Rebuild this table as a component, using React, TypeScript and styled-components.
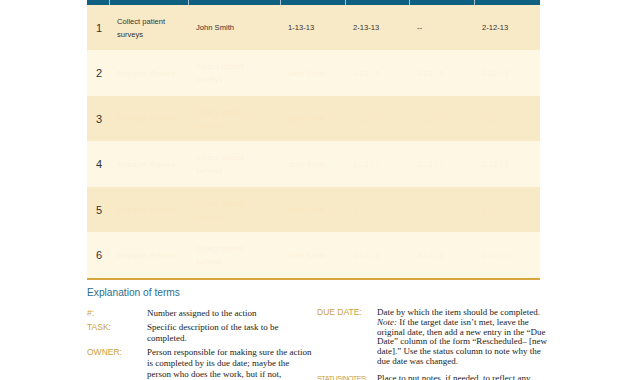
import styled, { createGlobalStyle } from "styled-components";

const GlobalStyle = createGlobalStyle`
  html, body {
    margin: 0;
    padding: 0;
    background: #ffffff;
  }
  body {
    font-family: "Liberation Sans", Arial, sans-serif;
    overflow: hidden;
  }
`;

const COLUMNS = "23px 79px 92px 65px 64px 65px 65px";

type Row = {
  num: number;
  task: string[];
  owner: string[];
  start: string;
  due: string;
  revised: string;
  done: string;
  ghost?: boolean;
};

const rows: Row[] = [
  {
    num: 1,
    task: ["Collect patient", "surveys"],
    owner: ["John Smith"],
    start: "1-13-13",
    due: "2-13-13",
    revised: "--",
    done: "2-12-13",
  },
  ...[2, 3, 4, 5, 6].map((n) => ({
    num: n,
    task: ["Example: Review"],
    owner: ["Collect patient", "surveys"],
    start: "John Smith",
    due: "1-13-13",
    revised: "2-13-13",
    done: "2-12-13",
    ghost: true,
  })),
];

function App(): JSX.Element {
  return (
    <>
      <GlobalStyle />
      <Page>
        <Sheet>
          <HeaderRow>
            {Array.from({ length: 7 }).map((_, i) => (
              <HeaderCell key={i} $last={i === 6} />
            ))}
          </HeaderRow>

          {rows.map((r) => (
            <BodyRow key={r.num} $alt={r.num % 2 === 0}>
              <NumCell>{r.num}</NumCell>
              <Cell $ghost={r.ghost}>
                {r.task.map((t) => (
                  <span key={t}>{t}</span>
                ))}
              </Cell>
              <Cell $ghost={r.ghost}>
                {r.owner.map((t) => (
                  <span key={t}>{t}</span>
                ))}
              </Cell>
              <Cell $ghost={r.ghost}>{r.start}</Cell>
              <Cell $ghost={r.ghost}>{r.due}</Cell>
              <Cell $ghost={r.ghost}>{r.revised}</Cell>
              <Cell $ghost={r.ghost}>{r.done}</Cell>
            </BodyRow>
          ))}
          <GoldRule />

          <Heading>Explanation of terms</Heading>

          <Terms>
            <TermColumn $lh={11} $gap={3}>
              <Term>
                <Label>#:</Label>
                <Desc>Number assigned to the action</Desc>
              </Term>
              <Term>
                <Label>TASK:</Label>
                <Desc>
                  Specific description of the task to be
                  <br />
                  completed.
                </Desc>
              </Term>
              <Term>
                <Label>OWNER:</Label>
                <Desc>
                  Person responsible for making sure the action
                  <br />
                  is completed by its due date; maybe the
                  <br />
                  person who does the work, but if not,
                </Desc>
              </Term>
            </TermColumn>

            <TermColumn $lh={9.8} $gap={7}>
              <Term>
                <Label>DUE DATE:</Label>
                <Desc>
                  Date by which the item should be completed.
                  <br />
                  <em>Note:</em> If the target date isn’t met, leave the
                  <br />
                  original date, then add a new entry in the “Due
                  <br />
                  Date” column of the form “Rescheduled– [new
                  <br />
                  date].” Use the status column to note why the
                  <br />
                  due date was changed.
                </Desc>
              </Term>
              <Term>
                <Label $tight>STATUS/NOTES:</Label>
                <Desc>Place to put notes, if needed, to reflect any</Desc>
              </Term>
            </TermColumn>
          </Terms>
        </Sheet>
      </Page>
    </>
  );
}

export default App;

const Page = styled.div`
  width: 630px;
  height: 380px;
  padding-left: 87px;
  box-sizing: border-box;
  overflow: hidden;
`;

const Sheet = styled.div`
  width: 453px;
  display: flex;
  flex-direction: column;
`;

const HeaderRow = styled.div`
  display: grid;
  grid-template-columns: ${COLUMNS};
  height: 5px;
  background: #0f6080;
`;

const HeaderCell = styled.div<{ $last?: boolean }>`
  border-right: ${(p) => (p.$last ? "none" : "1px solid #a9c3cf")};
`;

const BodyRow = styled.div<{ $alt?: boolean }>`
  display: grid;
  grid-template-columns: ${COLUMNS};
  height: ${(p) => (p.$alt ? "46px" : "45px")};
  background: ${(p) => (p.$alt ? "#fef7e4" : "#f9eac7")};
`;

const NumCell = styled.div`
  display: flex;
  align-items: center;
  padding-left: 9px;
  font-size: 11px;
  color: #333333;
`;

const Cell = styled.div<{ $ghost?: boolean }>`
  display: flex;
  flex-direction: column;
  justify-content: center;
  padding-left: 7px;
  font-size: 7.6px;
  line-height: 13px;
  white-space: nowrap;
  color: ${(p) => (p.$ghost ? "rgba(190, 150, 60, 0.08)" : "#333333")};
`;

const GoldRule = styled.div`
  height: 2px;
  background: #d6a73e;
`;

const Heading = styled.h2`
  margin: 7px 0 0;
  font-size: 10.2px;
  line-height: 12px;
  font-weight: normal;
  color: #2c6f8e;
`;

const Terms = styled.div`
  display: grid;
  grid-template-columns: 230px 223px;
  margin-top: 9px;
`;

const TermColumn = styled.div<{ $lh: number; $gap: number }>`
  display: flex;
  flex-direction: column;
  gap: ${(p) => p.$gap}px;
  line-height: ${(p) => p.$lh}px;
`;

const Term = styled.div`
  display: flex;
`;

const Label = styled.div<{ $tight?: boolean }>`
  width: 60px;
  flex: none;
  font-size: ${(p) => (p.$tight ? "7.4px" : "8.5px")};
  letter-spacing: ${(p) => (p.$tight ? "-0.6px" : "0")};
  color: #c9a243;
  white-space: nowrap;
`;

const Desc = styled.div`
  font-family: "Liberation Serif", "Times New Roman", serif;
  font-size: 9px;
  color: #222222;
  white-space: nowrap;
`;
